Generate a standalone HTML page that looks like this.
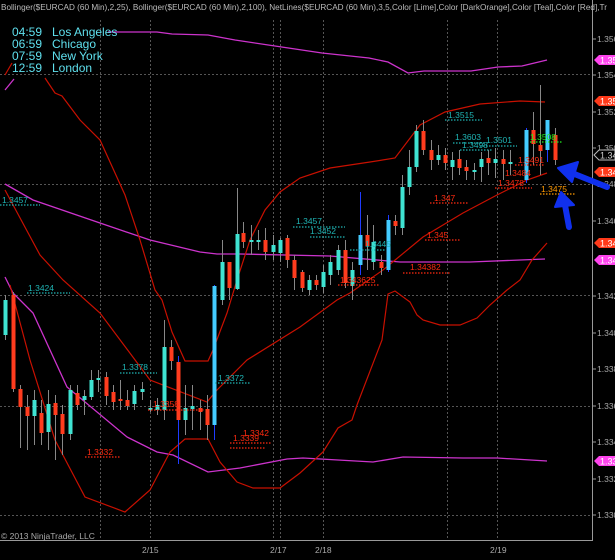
<!DOCTYPE html>
<html><head><meta charset="utf-8"><style>
html,body{margin:0;padding:0;background:#000;width:615px;height:560px;overflow:hidden}
svg{display:block}
text{font-family:"Liberation Sans",sans-serif}
</style></head><body>
<svg width="615" height="560" viewBox="0 0 615 560" xmlns="http://www.w3.org/2000/svg">
<rect width="615" height="560" fill="#000"/>
<g stroke="#555" stroke-width="1" stroke-dasharray="2,2" fill="none">
<line x1="0" y1="74.5" x2="592" y2="74.5"/>
<line x1="0" y1="184.5" x2="592" y2="184.5"/>
<line x1="0" y1="295.5" x2="592" y2="295.5"/>
<line x1="0" y1="406.5" x2="592" y2="406.5"/>
<line x1="0" y1="515.5" x2="592" y2="515.5"/>
<line x1="100.5" y1="20" x2="100.5" y2="540"/>
<line x1="150.5" y1="20" x2="150.5" y2="540"/>
<line x1="273.5" y1="20" x2="273.5" y2="540"/>
<line x1="280.5" y1="20" x2="280.5" y2="540"/>
<line x1="323.5" y1="20" x2="323.5" y2="540"/>
<line x1="447.5" y1="20" x2="447.5" y2="540"/>
<line x1="497.5" y1="20" x2="497.5" y2="540"/>
</g>
<line x1="592.5" y1="0" x2="592.5" y2="541" stroke="#999"/>
<line x1="0" y1="540.5" x2="593" y2="540.5" stroke="#999"/>
<g fill="#aaa" font-size="8.5">
<g stroke="#999"><line x1="592" y1="39" x2="596" y2="39"/><line x1="592" y1="75" x2="596" y2="75"/><line x1="592" y1="112" x2="596" y2="112"/><line x1="592" y1="148" x2="596" y2="148"/><line x1="592" y1="184" x2="596" y2="184"/><line x1="592" y1="221" x2="596" y2="221"/><line x1="592" y1="296" x2="596" y2="296"/><line x1="592" y1="333" x2="596" y2="333"/><line x1="592" y1="369" x2="596" y2="369"/><line x1="592" y1="406" x2="596" y2="406"/><line x1="592" y1="442" x2="596" y2="442"/><line x1="592" y1="479" x2="596" y2="479"/><line x1="592" y1="515" x2="596" y2="515"/></g>
<text x="597" y="42">1.356</text><text x="597" y="78">1.354</text><text x="597" y="115">1.352</text><text x="597" y="151">1.350</text><text x="597" y="187">1.348</text><text x="597" y="224">1.346</text><text x="597" y="299">1.342</text><text x="597" y="336">1.340</text><text x="597" y="372">1.338</text><text x="597" y="409">1.336</text><text x="597" y="445">1.334</text><text x="597" y="482">1.332</text><text x="597" y="518">1.330</text>
<text x="142" y="553">2/15</text><text x="270" y="553">2/17</text><text x="315" y="553">2/18</text><text x="490" y="553">2/19</text>
</g>
<g font-size="9" fill="#fff">
<path d="M594 60 l5 -5 h16 v10 h-16z" fill="#ff44ee"/><text x="600" y="63.5">1.354</text>
<path d="M594 101 l5 -5 h16 v10 h-16z" fill="#ff3a1a"/><text x="600" y="104.5">1.352</text>
<path d="M594 155 l5 -5 h16 v10 h-16z" fill="#000" stroke="#bbb"/><text x="600" y="158.5" fill="#ccc">1.345</text>
<path d="M594 172 l5 -5 h16 v10 h-16z" fill="#ff3a1a"/><text x="600" y="175.5">1.348</text>
<path d="M594 243 l5 -5 h16 v10 h-16z" fill="#ff3a1a"/><text x="600" y="246.5">1.344</text>
<path d="M594 260 l5 -5 h16 v10 h-16z" fill="#ff44ee"/><text x="600" y="263.5">1.342</text>
<path d="M594 461 l5 -5 h16 v10 h-16z" fill="#ff44ee"/><text x="600" y="464.5">1.333</text>
</g>
<g fill="none" stroke="#cc33cc" stroke-width="1.3">
<polyline points="108,32 157,32 172,34 208,35 235,40 275,46 322,53 369,58 388,62 408,73 424,71 471,71 498,67 522,66 547,60"/>
<polyline points="5,184 33,200 100,223 150,240 200,252 217,254 240,254 330,256 400,262 470,262 545,259"/>
<polyline points="5,277 13,293 33,313 67,387 127,437 157,452 173,455 208,472 240,468 287,459 303,458 373,462 403,457 463,458 497,458 547,461"/>
<polyline points="5,90 14,79"/>
</g>
<g fill="none" stroke="#c81000" stroke-width="1.2">
<polyline points="45,78 55,93 62,96 80,120 100,140 125,195 140,240 155,290 162,300 172,332 185,361 208,361 213,350 227,313 237,280 250,240 265,210 280,192 300,178 330,168 370,162 395,158 420,125 445,112 480,104 520,101 545,102"/>
<polyline points="5,190 40,255 63,280 100,313 150,380 207,402 217,390 247,360 300,327 337,300 350,293 383,270 423,237 463,213 497,195 527,180 547,173"/>
<polyline points="10,285 30,360 55,440 85,497 125,512 150,490 170,452 185,439 208,439 220,462 237,482 253,488 280,488 300,473 323,452 338,428 352,420 357,405 382,340 388,294 395,291 410,302 417,315 423,320 440,325 460,325 477,318 490,305 507,290 520,280 532,260 547,243"/>
<polyline points="5,75 12,63"/>
</g>
<g id="c"></g>
<g font-size="8.5" stroke-width="1.2" stroke-dasharray="1.5,1.5" fill="none">
<g stroke="#1fb5b5"><line x1="0" y1="205" x2="40" y2="205"/><line x1="27" y1="293" x2="70" y2="293"/><line x1="120" y1="373" x2="157" y2="373"/><line x1="215" y1="383" x2="250" y2="383"/><line x1="293" y1="227" x2="345" y2="227"/><line x1="310" y1="237" x2="345" y2="237"/><line x1="350" y1="250" x2="385" y2="250"/><line x1="445" y1="120" x2="482" y2="120"/><line x1="453" y1="143" x2="485" y2="143"/><line x1="460" y1="150" x2="492" y2="150"/><line x1="480" y1="146" x2="517" y2="146"/></g>
<g stroke="#ff2a10"><line x1="85" y1="457" x2="120" y2="457"/><line x1="148" y1="410" x2="205" y2="410"/><line x1="230" y1="443" x2="272" y2="443"/><line x1="230" y1="448" x2="265" y2="448"/><line x1="430" y1="203" x2="468" y2="203"/><line x1="425" y1="240" x2="460" y2="240"/><line x1="338" y1="285" x2="380" y2="285"/><line x1="403" y1="273" x2="450" y2="273"/><line x1="515" y1="165" x2="545" y2="165"/><line x1="495" y1="188" x2="532" y2="188"/></g>
<line x1="530" y1="142" x2="562" y2="142" stroke="#22ee22"/>
<line x1="540" y1="194" x2="576" y2="194" stroke="#ff9900"/>
</g>
<g font-size="8.5">
<g fill="#1fb5b5"><text x="2" y="203">1.3457</text><text x="28" y="291">1.3424</text><text x="122" y="370">1.3378</text><text x="218" y="381">1.3372</text><text x="296" y="224">1.3457</text><text x="310" y="234">1.3452</text><text x="365" y="247">1.3445</text><text x="448" y="118">1.3515</text><text x="455" y="140">1.3603</text><text x="462" y="148">1.3498</text><text x="486" y="143">1.3501</text></g>
<g fill="#ff2a10"><text x="87" y="455">1.3332</text><text x="153" y="407">1.3358</text><text x="243" y="436">1.3342</text><text x="233" y="441">1.3339</text><text x="434" y="201">1.347</text><text x="427" y="238">1.345</text><text x="340" y="283">1.343625</text><text x="410" y="270">1.34382</text><text x="518" y="163">1.3491</text><text x="505" y="176">1.3484</text><text x="498" y="186">1.3478</text></g>
<text x="530" y="140" fill="#22ee22">1.3508</text>
<text x="541" y="192" fill="#ff9900">1.3475</text>
</g>
<g stroke="#1030ee" stroke-width="6" stroke-linecap="round" fill="#1030ee">
<line x1="607" y1="187" x2="572" y2="173"/>
<path d="M558 168 L578 162 L572 182 Z" stroke-width="2" stroke-linejoin="round"/>
<line x1="569" y1="227" x2="565" y2="205"/>
<path d="M561 192 L574 205 L555 207 Z" stroke-width="2" stroke-linejoin="round"/>
</g>
<text x="1" y="10" font-size="8.5" fill="#bbb" textLength="606" lengthAdjust="spacingAndGlyphs">Bollinger($EURCAD (60 Min),2,25), Bollinger($EURCAD (60 Min),2,100), NetLines($EURCAD (60 Min),3,5,Color [Lime],Color [DarkOrange],Color [Teal],Color [Red],Tr</text>
<g font-size="12" fill="#5fe0ee">
<text x="12" y="36">04:59</text><text x="52" y="36">Los Angeles</text>
<text x="12" y="48">06:59</text><text x="52" y="48">Chicago</text>
<text x="12" y="60">07:59</text><text x="52" y="60">New York</text>
<text x="12" y="72">12:59</text><text x="52" y="72">London</text>
</g>
<text x="1" y="539" font-size="8.5" fill="#aaa">© 2013 NinjaTrader, LLC</text>
</svg>
<script>
var d=[[5,335,300,295,340,'c'],[13,295,389,292,392,'r'],[20,389,407,385,448,'r'],[27,407,416,395,450,'r'],[34,416,400,390,445,'c'],[41,413,433,400,445,'r'],[48,432,404,390,450,'c'],[55,403,415,395,460,'r'],[62,414,434,405,455,'r'],[70,434,390,385,440,'c'],[77,393,405,385,410,'r'],[84,400,396,390,415,'c'],[91,397,380,370,400,'c'],[98,380,378,370,392,'c'],[106,377,396,372,405,'r'],[113,392,402,385,410,'r'],[120,399,401,380,410,'r'],[127,400,406,390,410,'r'],[134,404,391,385,410,'c'],[142,392,389,382,400,'c'],[150,410,408,400,412,'c'],[157,410,405,398,415,'c'],[164,410,347,320,420,'c'],[171,347,361,340,370,'r'],[178,362,420,356,464,'R'],[185,420,408,385,435,'c'],[192,409,406,385,430,'c'],[200,408,412,400,430,'r'],[207,409,425,395,440,'r'],[214,425,286,285,440,'b'],[222,300,262,240,305,'c'],[229,262,288,262,300,'r'],[237,289,234,188,290,'c'],[243,233,242,222,248,'r'],[251,242,240,225,255,'c'],[258,242,240,230,250,'c'],[265,240,252,228,260,'r'],[273,252,245,235,260,'c'],[280,253,240,238,262,'c'],[287,238,260,235,268,'r'],[294,260,278,255,290,'r'],[302,272,288,270,292,'r'],[309,290,280,275,295,'c'],[316,280,285,275,290,'r'],[323,287,272,265,293,'c'],[330,275,262,255,285,'c'],[338,270,250,245,275,'c'],[345,250,283,240,288,'r'],[352,286,270,262,300,'c'],[360,265,235,192,275,'b'],[367,235,246,215,270,'r'],[373,262,242,225,270,'c'],[381,262,268,255,275,'r'],[388,270,220,215,272,'b'],[395,221,226,215,235,'r'],[402,228,187,175,235,'c'],[409,187,167,150,195,'c'],[416,167,131,125,172,'c'],[423,131,150,120,155,'r'],[431,150,160,140,170,'r'],[438,160,155,145,165,'c'],[445,155,163,148,170,'r'],[452,167,160,152,180,'c'],[459,159,168,150,175,'r'],[466,167,171,160,180,'r'],[474,172,170,163,180,'c'],[481,167,159,152,182,'c'],[488,158,163,150,175,'r'],[495,163,159,148,178,'c'],[503,159,164,150,180,'r'],[510,164,162,150,175,'c'],[526,180,130,128,183,'b'],[533,130,144,112,165,'r'],[540,145,151,85,175,'r'],[547,150,120,120,162,'b'],[555,135,160,128,165,'r']];
var g=document.getElementById('c'),s='';
d.forEach(function(a){var x=a[0],t=a[5];var col=t=='c'?'#3fe3d2':(t=='b'?'#44ccff':'#ff3c1e');var wc=(t=='b'||t=='R')?'#1f3cff':'#888';
s+='<line x1="'+(x+0.5)+'" y1="'+a[3]+'" x2="'+(x+0.5)+'" y2="'+a[4]+'" stroke="'+wc+'" stroke-width="1"/>';
var y=Math.min(a[1],a[2]),h=Math.max(2,Math.abs(a[1]-a[2]));
s+='<rect x="'+(x-1.5)+'" y="'+y+'" width="4" height="'+h+'" fill="'+col+'"/>';});
g.innerHTML=s;
</script>
</body></html>
